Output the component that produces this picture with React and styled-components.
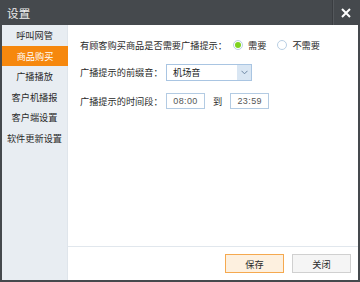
import React from "react";
import styled, { createGlobalStyle } from "styled-components";

const Global = createGlobalStyle`
  html, body { margin: 0; padding: 0; background: #fff; }
  body { font-family: "Noto Sans CJK SC", "Noto Sans", sans-serif; }
  * { box-sizing: border-box; }
`;

const Window = styled.div`
  width: 360px;
  height: 282px;
  display: flex;
  flex-direction: column;
  background: #45494d;
  padding: 0 2px 2px 2px;
`;

const TitleBar = styled.div`
  height: 25px;
  display: flex;
  align-items: stretch;
  justify-content: space-between;
  color: #f0f0f0;
`;

const Title = styled.div`
  display: flex;
  align-items: center;
  padding-left: 5px;
  font-size: 11.5px;
  letter-spacing: 0.3px;
`;

const CloseBtn = styled.div`
  width: 26px;
  display: flex;
  align-items: center;
  justify-content: center;
  border-left: 1px solid #3a3d41;
  box-shadow: inset 1px 0 0 #54585c;
`;

const Body = styled.div`
  flex: 1;
  display: flex;
  background: #fff;
`;

const Sidebar = styled.div`
  width: 66px;
  background: #e8edf2;
  border-right: 1px solid #dfe5eb;
  display: flex;
  flex-direction: column;
`;

const NavItem = styled.div`
  height: 20.5px;
  display: flex;
  align-items: center;
  justify-content: center;
  font-size: 9.2px;
  color: ${(p) => (p.$active ? "#fff" : "#2a2a2a")};
  background: ${(p) => (p.$active ? "#f6880e" : "transparent")};
  margin-right: ${(p) => (p.$active ? "-1px" : "0")};
`;

const Main = styled.div`
  flex: 1;
  display: flex;
  flex-direction: column;
`;

const Content = styled.div`
  flex: 1;
  padding: 11px 0 0 12px;
  display: flex;
  flex-direction: column;
`;

const Row = styled.div`
  height: 18px;
  display: flex;
  align-items: center;
  font-size: 9.2px;
  color: #2a2a2a;
  margin-top: ${(p) => p.$mt || 0}px;
`;

const Label = styled.span`
  width: ${(p) => p.$w || "auto"};
  white-space: nowrap;
`;

const Radio = styled.span`
  width: 10px;
  height: 10px;
  border-radius: 50%;
  border: 1px solid #b9cfe4;
  background: #fff;
  display: inline-flex;
  align-items: center;
  justify-content: center;
  margin: 0 5px 0 ${(p) => p.$ml || 0}px;
  &::after {
    content: "";
    width: 6px;
    height: 6px;
    border-radius: 50%;
    background: ${(p) => (p.$checked ? "#7ed321" : "transparent")};
  }
`;

const Select = styled.div`
  width: 86px;
  height: 17px;
  border: 1px solid #a9c5e2;
  display: flex;
  align-items: stretch;
  background: #fff;
`;

const SelectText = styled.div`
  flex: 1;
  display: flex;
  align-items: center;
  padding-left: 6px;
  color: #222;
`;

const Arrow = styled.div`
  width: 14px;
  background: #d9e6f3;
  display: flex;
  align-items: center;
  justify-content: center;
`;

const TimeInput = styled.div`
  width: 39px;
  height: 16px;
  border: 1px solid #b3cbe3;
  display: flex;
  align-items: center;
  justify-content: center;
  font-family: "Liberation Sans", Arial, sans-serif;
  font-size: 9px;
  color: #555;
  letter-spacing: 0.4px;
`;

const To = styled.span`
  margin: 0 8px 0 8px;
`;

const Footer = styled.div`
  height: 34px;
  border-top: 1px solid #e1e7ed;
  display: flex;
  align-items: center;
  justify-content: flex-end;
  gap: 8px;
  padding-right: 7px;
`;

const Button = styled.div`
  width: 59px;
  height: 19px;
  display: flex;
  align-items: center;
  justify-content: center;
  font-size: 9.2px;
  color: #2a2a2a;
  border: 1px solid ${(p) => (p.$primary ? "#f5a94f" : "#d0d0d0")};
  background: ${(p) => (p.$primary ? "#fdf0df" : "#f5f5f5")};
`;

const navItems = ["呼叫网管", "商品购买", "广播播放", "客户机播报", "客户端设置", "软件更新设置"];

export default function App() {
  return (
    <>
      <Global />
      <Window>
        <TitleBar>
          <Title>设置</Title>
          <CloseBtn>
            <svg width="10" height="10" viewBox="0 0 10 10">
              <path d="M1 1 L9 9 M9 1 L1 9" stroke="#fff" strokeWidth="2" />
            </svg>
          </CloseBtn>
        </TitleBar>
        <Body>
          <Sidebar>
            {navItems.map((t, i) => (
              <NavItem key={t} $active={i === 1}>{t}</NavItem>
            ))}
          </Sidebar>
          <Main>
            <Content>
              <Row>
                <Label>有顾客购买商品是否需要广播提示：</Label>
                <Radio $checked $ml={6} />
                <span>需要</span>
                <Radio $ml={11} />
                <span>不需要</span>
              </Row>
              <Row $mt={9}>
                <Label $w="86px">广播提示的前缀音：</Label>
                <Select>
                  <SelectText>机场音</SelectText>
                  <Arrow>
                    <svg width="7" height="5" viewBox="0 0 7 5">
                      <path d="M0.5 0.8 L3.5 3.8 L6.5 0.8" stroke="#6d87a3" strokeWidth="1" fill="none" />
                    </svg>
                  </Arrow>
                </Select>
              </Row>
              <Row $mt={11}>
                <Label $w="86px">广播提示的时间段：</Label>
                <TimeInput>08:00</TimeInput>
                <To>到</To>
                <TimeInput>23:59</TimeInput>
              </Row>
            </Content>
            <Footer>
              <Button $primary>保存</Button>
              <Button>关闭</Button>
            </Footer>
          </Main>
        </Body>
      </Window>
    </>
  );
}
